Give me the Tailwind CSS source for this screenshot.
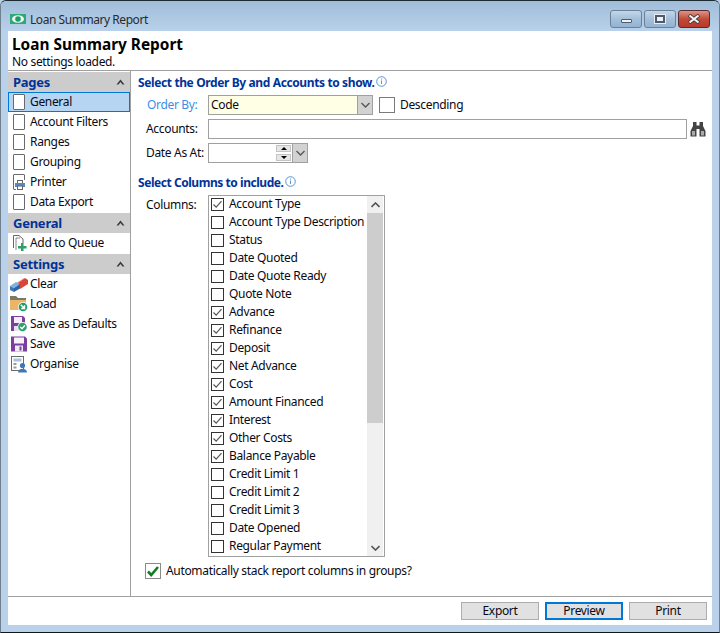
<!DOCTYPE html>
<html><head><meta charset="utf-8"><script src="https://cdn.jsdelivr.net/npm/@tailwindcss/browser@4"></script></head>
<body class="m-0 w-[720px] h-[633px] overflow-hidden bg-[#b9d1ea] font-['Noto_Sans',sans-serif] text-[12px] leading-[16px] tracking-[-0.33px] text-[#0a0a14]">
<div class="w-[720px] h-[633px] flex flex-col border border-[#6f7f8c] rounded-t-[6px] border-t-[#1c2a32] border-b-[#10181e]">
  <!-- title bar -->
  <div class="h-[30px] shrink-0 flex items-start pt-[8px] pl-[9px] pr-[9px] bg-gradient-to-b from-[#a0bdd9] to-[#b9d1ea] rounded-t-[6px]">
    <svg width="16" height="10" viewBox="0 0 16 10" class="mr-[4px] mt-[5px]"><rect width="16" height="10" fill="#2fa878"/><ellipse cx="8" cy="5" rx="6" ry="3.8" fill="#eef8f2"/><circle cx="8" cy="5" r="2.8" fill="#1f9a68"/></svg>
    <span class="text-[#2a2a2a] mt-[3px] tracking-[-0.45px]">Loan Summary Report</span>
    <div class="ml-auto flex gap-[2px] mt-[1px]">
      <div class="w-[32px] h-[18px] rounded-[3px] border border-[#6b8099] bg-gradient-to-b from-[#c4d7ea] via-[#a4bfd9] to-[#94b3d2] flex items-center justify-center"><div class="w-[11px] h-[4px] mt-[4px] bg-[#eef2f6] border border-[#4f5b68] rounded-[1px]"></div></div>
      <div class="w-[32px] h-[18px] rounded-[3px] border border-[#6b8099] bg-gradient-to-b from-[#c4d7ea] via-[#a4bfd9] to-[#94b3d2] flex items-center justify-center"><div class="w-[10px] h-[8px] border-[2px] border-[#4f5b68] bg-[#eef2f6] outline outline-1 outline-[#e6edf4]"></div></div>
      <div class="w-[32px] h-[18px] ml-[0px] rounded-[3px] border border-[#5a2a30] bg-gradient-to-b from-[#dc9488] via-[#c14a38] to-[#b8392a] flex items-center justify-center">
        <svg width="14" height="10" viewBox="0 0 14 10"><path d="M2 1 L12 9 M12 1 L2 9" stroke="#3a3a3a" stroke-width="3.6"/><path d="M2.5 1.5 L11.5 8.5 M11.5 1.5 L2.5 8.5" stroke="#f4f4f4" stroke-width="2.2"/></svg>
      </div>
    </div>
  </div>
  <!-- client -->
  <div class="h-[594px] shrink-0 mx-[7px] bg-white flex flex-col">
    <div class="h-[40px] shrink-0 border-b border-[#a0a0a0] px-[4px] pt-[5px]">
      <div class="font-bold text-[15.4px] leading-[18px] tracking-[0px] text-black">Loan Summary Report</div>
      <div class="leading-[14px] mt-[1px]">No settings loaded.</div>
    </div>
    <div class="flex-1 flex min-h-0">
      <!-- sidebar -->
      <div class="w-[123px] shrink-0 border-r border-[#a0a0a0] pt-[1px]">
        <div class="h-[20px] bg-[#cccccc] flex items-center pl-[5px] pr-[5px] font-bold text-[13px] tracking-[-0.25px] text-[#003399]">Pages<svg width="9" height="6" viewBox="0 0 9 6" class="ml-auto"><path d="M4.5 0.5 L8.5 5.5 L6.5 5.5 L4.5 3 L2.5 5.5 L0.5 5.5 Z" fill="#3a3a3a"/></svg></div>
        <div class="h-[20px] flex items-center gap-[5px] pl-[4px] bg-[#b5d5f2] border border-[#0078d7]"><div class="w-[12px] h-[16px] bg-white border border-[#6a6a6a] rounded-[1px]"></div>General</div>
        <div class="h-[20px] flex items-center gap-[5px] pl-[4px] border border-transparent"><div class="w-[12px] h-[16px] bg-white border border-[#6a6a6a] rounded-[1px]"></div>Account Filters</div>
        <div class="h-[20px] flex items-center gap-[5px] pl-[4px] border border-transparent"><div class="w-[12px] h-[16px] bg-white border border-[#6a6a6a] rounded-[1px]"></div>Ranges</div>
        <div class="h-[20px] flex items-center gap-[5px] pl-[4px] border border-transparent"><div class="w-[12px] h-[16px] bg-white border border-[#6a6a6a] rounded-[1px]"></div>Grouping</div>
        <div class="h-[20px] flex items-center gap-[5px] pl-[4px] border border-transparent">
          <svg width="12" height="16" viewBox="0 0 12 16"><path d="M0.5 15 V1 Q0.5 0.5 1 0.5 H11 Q11.5 0.5 11.5 1 V6" fill="none" stroke="#6a6a6a"/><path d="M0.5 15.5 H3" stroke="#6a6a6a"/><rect x="4.5" y="6.5" width="5" height="3" fill="#fff" stroke="#666"/><rect x="2" y="9" width="10" height="4" fill="#5b88b8"/><rect x="4.5" y="12" width="5" height="3.5" fill="#fff" stroke="#666"/></svg>Printer</div>
        <div class="h-[20px] flex items-center gap-[5px] pl-[4px] border border-transparent"><div class="w-[12px] h-[16px] bg-white border border-[#6a6a6a] rounded-[1px]"></div>Data Export</div>
        <div class="h-[20px] mt-[1px] bg-[#cccccc] flex items-center pl-[5px] pr-[5px] font-bold text-[13px] tracking-[-0.25px] text-[#003399]">General<svg width="9" height="6" viewBox="0 0 9 6" class="ml-auto"><path d="M4.5 0.5 L8.5 5.5 L6.5 5.5 L4.5 3 L2.5 5.5 L0.5 5.5 Z" fill="#3a3a3a"/></svg></div>
        <div class="h-[20px] flex items-center gap-[5px] pl-[4px] border border-transparent">
          <svg width="14" height="16" viewBox="0 0 14 16" class="-mr-[2px]"><path d="M0.5 13 V0.5 H6 L10 4 V8" fill="none" stroke="#666"/><path d="M3 15 V3 H7" fill="none" stroke="#888"/><path d="M8 8 H10.5 V11 H13.5 V13.5 H10.5 V16 H8 V13.5 H5 V11 H8 Z" fill="#2e9e6b"/></svg>Add to Queue</div>
        <div class="h-[20px] mt-[1px] bg-[#cccccc] flex items-center pl-[5px] pr-[5px] font-bold text-[13px] tracking-[-0.25px] text-[#003399]">Settings<svg width="9" height="6" viewBox="0 0 9 6" class="ml-auto"><path d="M4.5 0.5 L8.5 5.5 L6.5 5.5 L4.5 3 L2.5 5.5 L0.5 5.5 Z" fill="#3a3a3a"/></svg></div>
        <div class="h-[20px] flex items-center gap-[2px] pl-[1px] border border-transparent">
          <svg width="18" height="15" viewBox="0 0 18 15"><path d="M7 6 L15 1 L18 3 L18 7 L10 12 Z" fill="#d9453a"/><path d="M7 5.5 L13 1.5 L15 1 L8.5 5.5 Z" fill="#f2b0a8"/><path d="M0 9 L6 5 L10 7 L4 11 Z" fill="#7fb0e0"/><path d="M0 9 L4 11 L4 15 L0 13 Z" fill="#3f78b8"/><path d="M4 11 L10 7 L10 11.5 L4 15 Z" fill="#2f64a4"/></svg>Clear</div>
        <div class="h-[20px] flex items-center gap-[2px] pl-[1px] border border-transparent">
          <svg width="18" height="16" viewBox="0 0 18 16"><path d="M0 0 H6 L8 2 H16 V4 H0 Z" fill="#7a7a6a"/><rect x="0" y="4" width="16" height="10" fill="#eab566"/><circle cx="13" cy="11" r="5" fill="#fff"/><circle cx="13" cy="11" r="4.3" fill="#1f9e6a"/><path d="M10.8 8.8 L14 12 M14.5 9.2 V12.5 H11.2" stroke="#fff" stroke-width="1.4" fill="none"/></svg>Load</div>
        <div class="h-[20px] flex items-center gap-[2px] pl-[1px] border border-transparent">
          <svg width="18" height="16" viewBox="0 0 18 16"><path d="M1 0 H13 L15 2 V15 H1 Z" fill="#7c3f9e"/><rect x="4" y="1" width="8" height="6" fill="#f4eef8"/><rect x="4" y="10" width="7" height="5" fill="#e8dff0"/><circle cx="12.5" cy="11" r="5" fill="#fff"/><circle cx="12.5" cy="11" r="4.3" fill="#2e9e6b"/><path d="M10.2 11 L12 12.8 L15 9.3" stroke="#fff" stroke-width="1.4" fill="none"/></svg>Save as Defaults</div>
        <div class="h-[20px] flex items-center gap-[2px] pl-[1px] border border-transparent">
          <svg width="18" height="16" viewBox="0 0 18 16"><path d="M1 0.5 H15 L17 2.5 V15.5 H1 Z" fill="#7c3f9e"/><rect x="4" y="1.5" width="10" height="6" fill="#f6f1fa"/><rect x="5" y="9.5" width="8" height="6" fill="#f0e9f6"/><rect x="9.5" y="10.5" width="2" height="4" fill="#7c3f9e"/></svg>Save</div>
        <div class="h-[20px] flex items-center gap-[2px] pl-[1px] border border-transparent">
          <svg width="18" height="17" viewBox="0 0 18 17"><rect x="1.5" y="0.5" width="12" height="14" fill="#fff" stroke="#6a6a6a"/><rect x="3.5" y="2.5" width="8" height="3" fill="#a8c2dc"/><rect x="3.5" y="7" width="3" height="2" fill="#999"/><rect x="3.5" y="10.5" width="3" height="2" fill="#999"/><circle cx="12.5" cy="9.5" r="2.6" fill="#3f78b8"/><path d="M8 16.5 C8 11.5 17 11.5 17 16.5 Z" fill="#3f78b8"/></svg>Organise</div>
      </div>
      <!-- main -->
      <div class="flex-1 min-w-0 pl-[7px] pt-[4px] flex flex-col">
        <div class="flex h-[16px] items-center font-bold tracking-[-0.38px] text-[#003399]">Select the Order By and Accounts to show.<svg width="11" height="11" viewBox="0 0 11 11" class="ml-[2px] -mt-[4px]"><circle cx="5.5" cy="5.5" r="4.8" fill="none" stroke="#5b93d4"/><rect x="5" y="4.5" width="1" height="3.5" fill="#5b93d4"/><rect x="5" y="2.5" width="1" height="1" fill="#5b93d4"/></svg></div>
        <div class="flex items-center mt-[4px] h-[20px]">
          <div class="w-[70px] pl-[9px] text-[#3b8fe6]">Order By:</div>
          <div class="w-[165px] h-[20px] flex border border-[#a0a0a0] bg-[#ffffe6] pl-[2px] items-center">Code<div class="ml-auto w-[15px] h-[18px] bg-[#d2d2d2] border-l border-[#a0a0a0] flex items-center justify-center"><svg width="9" height="6" viewBox="0 0 9 6"><path d="M0.5 1 L4.5 5 L8.5 1" fill="none" stroke="#555" stroke-width="1.3"/></svg></div></div>
          <div class="w-[16px] h-[16px] ml-[6px] border border-[#7a7a7a] bg-white"></div>
          <div class="ml-[5px]">Descending</div>
        </div>
        <div class="flex items-center mt-[4px] h-[20px]">
          <div class="w-[70px] pl-[8px]">Accounts:</div>
          <div class="w-[479px] h-[20px] border border-[#a0a0a0] bg-white"></div>
          <svg width="16" height="16" viewBox="0 0 16 16" class="ml-[3px]"><path d="M3 1 H6.5 V4.5 H9.5 V1 H13 V5 L15.5 10 V15.5 H9.5 V8 H6.5 V15.5 H0.5 V10 L3 5 Z" fill="#444"/><rect x="2" y="10" width="3" height="4.5" fill="#aaa"/><rect x="11" y="10" width="3" height="4.5" fill="#aaa"/></svg>
        </div>
        <div class="flex items-center mt-[4px] h-[20px]">
          <div class="w-[70px] pl-[8px]">Date As At:</div>
          <div class="w-[100px] h-[20px] flex border border-[#a0a0a0] bg-white">
            <div class="ml-auto w-[15px] flex flex-col justify-between py-[1px] mr-[1px]">
              <div class="h-[7px] bg-[#e6e6e6] border border-[#c4c4c4] flex items-center justify-center"><div class="w-0 h-0 border-x-[3px] border-x-transparent border-b-[3px] border-b-black"></div></div>
              <div class="h-[7px] bg-[#e6e6e6] border border-[#c4c4c4] flex items-center justify-center"><div class="w-0 h-0 border-x-[3px] border-x-transparent border-t-[3px] border-t-black"></div></div>
            </div>
            <div class="w-[15px] bg-[#d2d2d2] border-l border-[#a0a0a0] flex items-center justify-center"><svg width="9" height="6" viewBox="0 0 9 6"><path d="M0.5 1 L4.5 5 L8.5 1" fill="none" stroke="#555" stroke-width="1.3"/></svg></div>
          </div>
        </div>
        <div class="flex h-[16px] items-center font-bold tracking-[-0.45px] text-[#003399] mt-[12px]">Select Columns to include.<svg width="11" height="11" viewBox="0 0 11 11" class="ml-[2px] -mt-[4px]"><circle cx="5.5" cy="5.5" r="4.8" fill="none" stroke="#5b93d4"/><rect x="5" y="4.5" width="1" height="3.5" fill="#5b93d4"/><rect x="5" y="2.5" width="1" height="1" fill="#5b93d4"/></svg></div>
        <div class="flex mt-[4px]">
          <div class="w-[70px] pl-[8px] pt-[2px]">Columns:</div>
          <div class="w-[177px] h-[362px] border border-[#a0a0a0] flex bg-white">
            <div class="flex-1 min-w-0 whitespace-nowrap -mt-[1px]">
              <div class="h-[18px] flex items-center pl-[2px] gap-[5px]"><svg width="13" height="13" viewBox="0 0 13 13" class="shrink-0"><rect x="0.5" y="0.5" width="12" height="12" fill="#fff" stroke="#333"/><path d="M2.5 6.5 L5.2 9.2 L10.5 3.2" fill="none" stroke="#555" stroke-width="1.2"/></svg>Account Type</div>
              <div class="h-[18px] flex items-center pl-[2px] gap-[5px]"><div class="w-[13px] h-[13px] shrink-0 border border-[#333]"></div>Account Type Description</div>
              <div class="h-[18px] flex items-center pl-[2px] gap-[5px]"><div class="w-[13px] h-[13px] shrink-0 border border-[#333]"></div>Status</div>
              <div class="h-[18px] flex items-center pl-[2px] gap-[5px]"><div class="w-[13px] h-[13px] shrink-0 border border-[#333]"></div>Date Quoted</div>
              <div class="h-[18px] flex items-center pl-[2px] gap-[5px]"><div class="w-[13px] h-[13px] shrink-0 border border-[#333]"></div>Date Quote Ready</div>
              <div class="h-[18px] flex items-center pl-[2px] gap-[5px]"><div class="w-[13px] h-[13px] shrink-0 border border-[#333]"></div>Quote Note</div>
              <div class="h-[18px] flex items-center pl-[2px] gap-[5px]"><svg width="13" height="13" viewBox="0 0 13 13" class="shrink-0"><rect x="0.5" y="0.5" width="12" height="12" fill="#fff" stroke="#333"/><path d="M2.5 6.5 L5.2 9.2 L10.5 3.2" fill="none" stroke="#555" stroke-width="1.2"/></svg>Advance</div>
              <div class="h-[18px] flex items-center pl-[2px] gap-[5px]"><svg width="13" height="13" viewBox="0 0 13 13" class="shrink-0"><rect x="0.5" y="0.5" width="12" height="12" fill="#fff" stroke="#333"/><path d="M2.5 6.5 L5.2 9.2 L10.5 3.2" fill="none" stroke="#555" stroke-width="1.2"/></svg>Refinance</div>
              <div class="h-[18px] flex items-center pl-[2px] gap-[5px]"><svg width="13" height="13" viewBox="0 0 13 13" class="shrink-0"><rect x="0.5" y="0.5" width="12" height="12" fill="#fff" stroke="#333"/><path d="M2.5 6.5 L5.2 9.2 L10.5 3.2" fill="none" stroke="#555" stroke-width="1.2"/></svg>Deposit</div>
              <div class="h-[18px] flex items-center pl-[2px] gap-[5px]"><svg width="13" height="13" viewBox="0 0 13 13" class="shrink-0"><rect x="0.5" y="0.5" width="12" height="12" fill="#fff" stroke="#333"/><path d="M2.5 6.5 L5.2 9.2 L10.5 3.2" fill="none" stroke="#555" stroke-width="1.2"/></svg>Net Advance</div>
              <div class="h-[18px] flex items-center pl-[2px] gap-[5px]"><svg width="13" height="13" viewBox="0 0 13 13" class="shrink-0"><rect x="0.5" y="0.5" width="12" height="12" fill="#fff" stroke="#333"/><path d="M2.5 6.5 L5.2 9.2 L10.5 3.2" fill="none" stroke="#555" stroke-width="1.2"/></svg>Cost</div>
              <div class="h-[18px] flex items-center pl-[2px] gap-[5px]"><svg width="13" height="13" viewBox="0 0 13 13" class="shrink-0"><rect x="0.5" y="0.5" width="12" height="12" fill="#fff" stroke="#333"/><path d="M2.5 6.5 L5.2 9.2 L10.5 3.2" fill="none" stroke="#555" stroke-width="1.2"/></svg>Amount Financed</div>
              <div class="h-[18px] flex items-center pl-[2px] gap-[5px]"><svg width="13" height="13" viewBox="0 0 13 13" class="shrink-0"><rect x="0.5" y="0.5" width="12" height="12" fill="#fff" stroke="#333"/><path d="M2.5 6.5 L5.2 9.2 L10.5 3.2" fill="none" stroke="#555" stroke-width="1.2"/></svg>Interest</div>
              <div class="h-[18px] flex items-center pl-[2px] gap-[5px]"><svg width="13" height="13" viewBox="0 0 13 13" class="shrink-0"><rect x="0.5" y="0.5" width="12" height="12" fill="#fff" stroke="#333"/><path d="M2.5 6.5 L5.2 9.2 L10.5 3.2" fill="none" stroke="#555" stroke-width="1.2"/></svg>Other Costs</div>
              <div class="h-[18px] flex items-center pl-[2px] gap-[5px]"><svg width="13" height="13" viewBox="0 0 13 13" class="shrink-0"><rect x="0.5" y="0.5" width="12" height="12" fill="#fff" stroke="#333"/><path d="M2.5 6.5 L5.2 9.2 L10.5 3.2" fill="none" stroke="#555" stroke-width="1.2"/></svg>Balance Payable</div>
              <div class="h-[18px] flex items-center pl-[2px] gap-[5px]"><div class="w-[13px] h-[13px] shrink-0 border border-[#333]"></div>Credit Limit 1</div>
              <div class="h-[18px] flex items-center pl-[2px] gap-[5px]"><div class="w-[13px] h-[13px] shrink-0 border border-[#333]"></div>Credit Limit 2</div>
              <div class="h-[18px] flex items-center pl-[2px] gap-[5px]"><div class="w-[13px] h-[13px] shrink-0 border border-[#333]"></div>Credit Limit 3</div>
              <div class="h-[18px] flex items-center pl-[2px] gap-[5px]"><div class="w-[13px] h-[13px] shrink-0 border border-[#333]"></div>Date Opened</div>
              <div class="h-[18px] flex items-center pl-[2px] gap-[5px]"><div class="w-[13px] h-[13px] shrink-0 border border-[#333]"></div>Regular Payment</div>
            </div>
            <div class="w-[16px] mr-[1px] shrink-0 bg-[#f0f0f0] flex flex-col">
              <div class="h-[17px] flex items-center justify-center"><svg width="9" height="6" viewBox="0 0 9 6"><path d="M0.5 5 L4.5 1 L8.5 5" fill="none" stroke="#555" stroke-width="1.6"/></svg></div>
              <div class="h-[210px] bg-[#cdcdcd]"></div>
              <div class="mt-auto h-[17px] flex items-center justify-center"><svg width="9" height="6" viewBox="0 0 9 6"><path d="M0.5 1 L4.5 5 L8.5 1" fill="none" stroke="#555" stroke-width="1.6"/></svg></div>
            </div>
          </div>
        </div>
        <div class="flex items-center ml-[7px] mt-[6px] h-[16px]">
          <svg width="16" height="16" viewBox="0 0 16 16"><rect x="0.5" y="0.5" width="15" height="15" fill="#fff" stroke="#8a8a8a"/><path d="M3 8.5 L6.2 12 L13 4" fill="none" stroke="#0f7f22" stroke-width="2.6"/></svg>
          <span class="ml-[5px]">Automatically stack report columns in groups?</span>
        </div>
      </div>
    </div>
    <!-- bottom bar -->
    <div class="h-[29px] shrink-0 border-t border-[#a0a0a0] flex justify-end items-start gap-[6px] pr-[5px] pt-[5px]">
      <div class="w-[78px] h-[18px] bg-[#e1e1e1] border border-[#adadad] flex items-center justify-center">Export</div>
      <div class="w-[78px] h-[18px] bg-[#e1e1e1] border-2 border-[#0078d7] flex items-center justify-center">Preview</div>
      <div class="w-[78px] h-[18px] bg-[#e1e1e1] border border-[#adadad] flex items-center justify-center">Print</div>
    </div>
  </div>
</div>
</body></html>
